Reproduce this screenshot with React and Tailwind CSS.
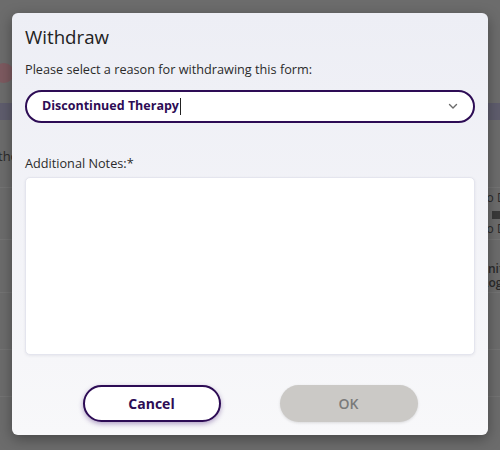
import React from 'react'

const font = { fontFamily: '"Open Sans", "Noto Sans", sans-serif' }

function BackgroundPage() {
  return (
    <div className="flex flex-col w-full h-full bg-[#6c6c6c] text-[#2a2a2a]">
      <div className="h-[100px] flex items-start pt-[63px]">
        <span className="w-[20px] h-[20px] rounded-full bg-[#7d5a60] -ml-[6px]"></span>
      </div>
      <div className="h-[3px]"></div>
      <div className="h-[17px] bg-[#5f5d6d]"></div>
      <div className="h-[68px] flex items-start pt-[27px] border-b border-[#747474]">
        <span className="text-[13px] -ml-[21px] whitespace-nowrap">Method</span>
      </div>
      <div className="h-[52px] flex justify-end border-b border-[#747474]">
        <div className="w-[12px] flex flex-col text-[12px] leading-[15px] pt-[2px] overflow-hidden whitespace-nowrap">
          <span className="-ml-[8px]">To Do</span>
          <span className="w-[14px] h-[8px] bg-[#3a3a3a] mt-[6px] mb-[2px] ml-[4px]"></span>
          <span className="-ml-[8px]">To Do</span>
        </div>
      </div>
      <div className="h-[53px] flex justify-end border-b border-[#747474]">
        <div className="w-[12px] flex flex-col text-[12px] leading-[14px] pt-[22px] font-semibold overflow-hidden whitespace-nowrap">
          <span className="-ml-[9px]">Unit</span>
          <span className="-ml-[6px]">Log</span>
        </div>
      </div>
      <div className="h-[57px] border-b border-[#747474]"></div>
      <div className="h-[47px] border-b border-[#747474]"></div>
      <div className="flex-1"></div>
    </div>
  )
}

function ChevronDown() {
  return (
    <svg width="10" height="7" viewBox="0 0 10 7" fill="none">
      <path d="M1.5 1.5L5 5L8.5 1.5" stroke="#6b6b6b" strokeWidth="1.4" strokeLinecap="round" strokeLinejoin="round" />
    </svg>
  )
}

function WithdrawModal() {
  return (
    <div className="absolute left-[12px] top-[13px] w-[476px] h-[422px] rounded-[6px] bg-gradient-to-b from-[#edeef5] to-[#f8f8fa] shadow-[0_4px_14px_rgba(0,0,0,0.35)] px-[13px] pt-[10px] pb-[13px] flex flex-col">
      <h2 className="text-[18.7px] leading-[28px] text-[#222]">Withdraw</h2>
      <p className="mt-[8px] text-[12.7px] leading-[20px] text-[#2b2b2b]">Please select a reason for withdrawing this form:</p>

      <div className="mt-[11px] h-[33px] rounded-full border-2 border-[#2d0c55] bg-white flex items-center justify-between pl-[15px] pr-[15px]">
        <div className="flex items-center">
          <span className="text-[12.5px] font-bold text-[#2d0c55]">Discontinued Therapy</span>
          <span className="w-[1px] h-[17px] bg-[#222] ml-[1px]"></span>
        </div>
        <ChevronDown />
      </div>

      <label className="mt-[30px] text-[12.7px] leading-[20px] text-[#2b2b2b]">Additional Notes:*</label>
      <textarea className="mt-[4px] h-[178px] w-full resize-none rounded-[5px] bg-white border border-[#e4e5ee] shadow-[0_1px_3px_rgba(40,40,80,0.08)] outline-none"></textarea>

      <div className="mt-auto flex justify-center gap-[59px]">
        <button className="w-[138px] h-[37px] rounded-full bg-white border-2 border-[#2d0c55] text-[#2d0c55] text-[14px] font-bold shadow-[0_2px_5px_rgba(70,30,120,0.4)]">
          Cancel
        </button>
        <button className="w-[138px] h-[37px] rounded-full bg-[#cbc9c6] text-[#7a7a7a] text-[14px] font-semibold shadow-[0_1px_3px_rgba(0,0,0,0.12)]">
          OK
        </button>
      </div>
    </div>
  )
}

export default function App() {
  return (
    <div className="relative w-[500px] h-[450px] overflow-hidden" style={font}>
      <BackgroundPage />
      <WithdrawModal />
    </div>
  )
}
